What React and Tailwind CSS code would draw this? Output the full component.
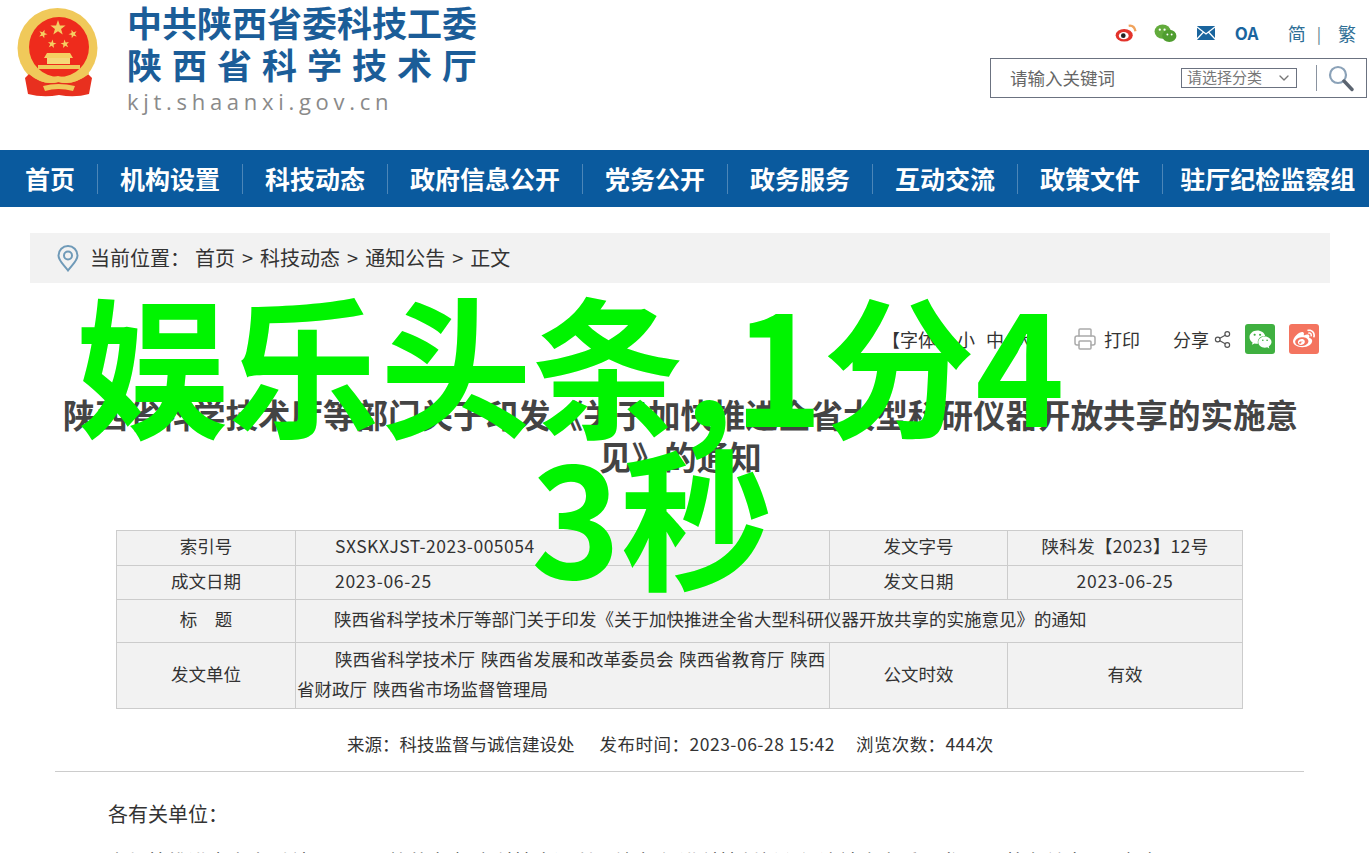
import { Printer, Share2, ChevronDown } from 'lucide-react';
import { FaWeibo, FaWeixin } from 'react-icons/fa';

const navItems = ['首页', '机构设置', '科技动态', '政府信息公开', '党务公开', '政务服务', '互动交流', '政策文件'];
const crumbs = ['首页', '科技动态', '通知公告', '正文'];
const colon = '\uFF1A';

function Star({ x, y, r, rot = 0 }) {
  const pts = [];
  for (let i = 0; i < 10; i++) {
    const rad = i % 2 === 0 ? r : r * 0.4;
    const a = ((i * 36 - 90 + rot) * Math.PI) / 180;
    pts.push(`${x + rad * Math.cos(a)},${y + rad * Math.sin(a)}`);
  }
  return <polygon points={pts.join(' ')} fill="#f5cf62" />;
}

function Emblem() {
  return (
    <svg width="84" height="90" viewBox="0 0 84 90" className="shrink-0">
      <circle cx="40.5" cy="40" r="40" fill="#f0c95a" />
      <circle cx="42" cy="39" r="30" fill="#ee2b1c" />
      <Star x={41} y={20} r={8} />
      <Star x={26} y={26} r={4.5} rot={20} />
      <Star x={56} y={26} r={4.5} rot={-20} />
      <Star x={35} y={36} r={4.5} rot={10} />
      <Star x={48} y={36} r={4.5} rot={-10} />
      <path d="M30 45 H53 L56 50 H27 Z" fill="#f5cf62" />
      <rect x="30" y="50" width="23" height="6" fill="#f5d878" />
      <rect x="21" y="57" width="42" height="4" fill="#f0c95a" />
      <path d="M12 66 L8 70 L11 86 Q26 90 42 87 Q58 90 72 86 L75 70 L71 66 Q56 78 42 74 Q26 78 12 66 Z" fill="#e8301f" />
      <path d="M14 60 Q28 72 41 68 Q54 72 70 60 L72 66 Q56 78 41 74 Q26 78 12 66 Z" fill="#f0c95a" />
      <path d="M26 78 Q41 74 58 78 L56 83 Q41 79 28 83 Z" fill="#f0c95a" />
    </svg>
  );
}

function WechatColor() {
  return (
    <svg width="23" height="19" viewBox="0 0 24 20">
      <ellipse cx="9" cy="8" rx="8.5" ry="7.5" fill="#62ab3c" />
      <ellipse cx="16" cy="12.5" rx="7.5" ry="6.5" fill="#4f9d2f" />
      <circle cx="6" cy="6" r="1.2" fill="#fff" />
      <circle cx="11" cy="6" r="1.2" fill="#fff" />
      <circle cx="14" cy="11" r="1" fill="#fff" />
      <circle cx="18.5" cy="11" r="1" fill="#fff" />
    </svg>
  );
}

function WeiboColor() {
  return (
    <svg width="22" height="18" viewBox="0 0 24 20">
      <ellipse cx="10" cy="12.5" rx="9.5" ry="7" fill="#e2332b" />
      <ellipse cx="9.5" cy="13" rx="5.5" ry="4" fill="#fff" />
      <circle cx="9" cy="13" r="2.6" fill="#222" />
      <path d="M15 2 Q21 1 22.5 8" stroke="#f0a35c" strokeWidth="2.6" fill="none" />
    </svg>
  );
}

function MailIcon() {
  return (
    <svg width="18" height="14" viewBox="0 0 18 14">
      <rect width="18" height="14" rx="1" fill="#1a659e" />
      <path d="M0 1 L9 8 L18 1 M0 13 L6.5 6 M18 13 L11.5 6" stroke="#fff" strokeWidth="1.3" fill="none" />
    </svg>
  );
}

function SearchIcon() {
  return (
    <svg width="26" height="27" viewBox="0 0 26 27">
      <circle cx="10" cy="10" r="8" fill="none" stroke="#8ba2b8" strokeWidth="2.2" />
      <path d="M16 16 L24 24.5" stroke="#5b6470" strokeWidth="3.4" strokeLinecap="round" />
    </svg>
  );
}

function PinIcon() {
  return (
    <svg width="22" height="27" viewBox="0 0 22 27">
      <path d="M11 25.5 C6 19 1.5 15.5 1.5 10.5 A9.5 9.5 0 0 1 20.5 10.5 C20.5 15.5 16 19 11 25.5 Z" fill="none" stroke="#6f9ab8" strokeWidth="2" />
      <circle cx="11" cy="10.5" r="4" fill="none" stroke="#6f9ab8" strokeWidth="2" />
    </svg>
  );
}

function Header() {
  return (
    <div className="h-[150px] flex justify-between">
      <div className="flex pl-[17px] pt-[8px]">
        <Emblem />
        <div className="ml-[26px] -mt-[9px] w-[352px]">
          <div className="text-[35px] leading-[46px] font-bold text-[#1b5d98] whitespace-nowrap">中共陕西省委科技工委</div>
          <div className="text-[35px] leading-[41px] -mt-[2px] font-bold text-[#1b5d98] tracking-[10px] whitespace-nowrap">陕西省科学技术厅</div>
          <div className="text-[22px] leading-[30px] mt-[2px] text-[#8a8a8a] tracking-[4.7px] font-['Open_Sans',sans-serif]">kjt.shaanxi.gov.cn</div>
        </div>
      </div>
      <div className="w-[377px] mr-[2px] flex flex-col items-end">
        <div className="h-[58px] flex items-center pt-[8px] pr-[11px]">
          <WeiboColor />
          <div className="ml-[17px]"><WechatColor /></div>
          <div className="ml-[20px]"><MailIcon /></div>
          <div className="ml-[20px] w-[26px] text-[17px] font-bold text-[#1a659e]">OA</div>
          <div className="ml-[27px] text-[18px] text-[#2f6f96]">简</div>
          <div className="ml-[11px] mr-[17px] text-[16px] text-[#5a7f8c]">|</div>
          <div className="text-[18px] text-[#2f6f96]">繁</div>
        </div>
        <div className="w-full h-[40px] border border-[#6b7280] flex items-center pl-[19px]">
          <div className="w-[171px] text-[17.5px] text-[#666]">请输入关键词</div>
          <div className="w-[116px] h-[20px] border border-[#6b7280] flex items-center justify-between pl-[5px] pr-[4px] text-[15px] text-[#777]">
            <span className="pb-[2px]">请选择分类</span>
            <ChevronDown size={16} />
          </div>
          <div className="ml-[19px] h-[26px] border-l border-[#8a93a0]" />
          <div className="ml-[11px]"><SearchIcon /></div>
        </div>
      </div>
    </div>
  );
}

function Nav() {
  return (
    <div className="h-[57px] bg-[#0a5a9e] flex items-center pl-[3px] text-white text-[25px] font-bold whitespace-nowrap">
      {navItems.map((item, i) => (
        <div key={item} className={i === 0 ? 'px-[22px] leading-[28px] pb-[2px]' : 'px-[22px] border-l border-[#4c86b8] leading-[28px] pb-[2px]'}>
          {item}
        </div>
      ))}
      <div className="pl-[17px] border-l border-[#4c86b8] leading-[28px] pb-[2px]">驻厅纪检监察组</div>
    </div>
  );
}

function Toolbar() {
  return (
    <div className="h-[30px] mt-[41px] mr-[50px] flex items-center justify-end text-[18px] text-[#333] whitespace-nowrap">
      <span>【字体{colon}</span>
      <span className="ml-[3px]">小</span>
      <span className="ml-[11px]">中</span>
      <span className="ml-[11px]">大】</span>
      <Printer size={24} strokeWidth={1.5} className="ml-[22px] text-[#aaa]" />
      <span className="ml-[7px]">打印</span>
      <span className="ml-[33px]">分享</span>
      <Share2 size={19} strokeWidth={1.5} className="ml-[4px] text-[#555]" />
      <div className="ml-[13px] w-[30px] h-[30px] rounded-[3px] bg-[#3fb040] flex items-center justify-center">
        <FaWeixin size={23} color="#fff" />
      </div>
      <div className="ml-[14px] w-[30px] h-[30px] rounded-[3px] bg-[#f4745f] flex items-center justify-center">
        <FaWeibo size={22} color="#fff" />
      </div>
    </div>
  );
}

function InfoTable() {
  const label = 'border border-[#ccc] text-center font-normal pb-[3px]';
  const cell = 'border border-[#ccc] pb-[3px]';
  return (
    <table className="ml-[116px] w-[1127px] table-fixed border-collapse bg-[#f2f2f2] text-[17.5px] text-[#333]">
      <tbody>
        <tr className="h-[35px]">
          <td className={`${label} w-[179px]`}>索引号</td>
          <td className={`${cell} w-[534px] pl-[39px] tracking-[0.5px]`}>SXSKXJST-2023-005054</td>
          <td className={`${label} w-[178px]`}>发文字号</td>
          <td className={`${label} w-[235px] tracking-[0.3px]`}>陕科发【2023】12号</td>
        </tr>
        <tr className="h-[34px]">
          <td className={label}>成文日期</td>
          <td className={`${cell} pl-[39px] tracking-[0.7px]`}>2023-06-25</td>
          <td className={label}>发文日期</td>
          <td className={`${label} tracking-[0.7px]`}>2023-06-25</td>
        </tr>
        <tr className="h-[43px]">
          <td className={label}>标&emsp;题</td>
          <td colSpan={3} className={`${cell} pl-[38px]`}>陕西省科学技术厅等部门关于印发《关于加快推进全省大型科研仪器开放共享的实施意见》的通知</td>
        </tr>
        <tr className="h-[66px]">
          <td className={label}>发文单位</td>
          <td className={`${cell} px-[1px] indent-[38px] leading-[30px] [word-spacing:2px]`}>陕西省科学技术厅 陕西省发展和改革委员会 陕西省教育厅 陕西省财政厅 陕西省市场监督管理局</td>
          <td className={label}>公文时效</td>
          <td className={label}>有效</td>
        </tr>
      </tbody>
    </table>
  );
}

export default function App() {
  return (
    <div className="relative h-[853px] overflow-hidden bg-white font-['Noto_Sans_CJK_SC','Liberation_Sans',sans-serif]">
      <Header />
      <Nav />

      <div className="mt-[26px] mx-[30px] w-[1300px] h-[50px] bg-[#f2f2f2] flex items-center pl-[27px] text-[20px] text-[#333] whitespace-nowrap">
        <PinIcon />
        <span className="ml-[11px]">当前位置{colon}</span>
        <span className="ml-[5px] flex">
          {crumbs.map((c, i) => (
            <span key={c} className="flex">
              {i > 0 && <span className="mx-[7px]">&gt;</span>}
              {c}
            </span>
          ))}
        </span>
      </div>

      <Toolbar />

      <h1 className="mt-[39px] ml-[56px] mr-[64px] text-[32.5px] leading-[42px] font-bold text-[#444] text-center">
        陕西省科学技术厅等部门关于印发《关于加快推进全省大型科研仪器开放共享的实施意见》的通知
      </h1>

      <div className="mt-[53px]">
        <InfoTable />
      </div>

      <div className="mt-[22px] h-[26px] flex items-center pl-[347px] text-[17.5px] text-[#333] whitespace-nowrap">
        <span>来源{colon}科技监督与诚信建设处</span>
        <span className="ml-[25px] tracking-[0.5px]">发布时间{colon}2023-06-28 15:42</span>
        <span className="ml-[21px] tracking-[0.4px]">浏览次数{colon}444次</span>
      </div>

      <div className="mt-[14px] ml-[55px] w-[1249px] border-t border-[#ccc]" />

      <p className="mt-[28px] ml-[108px] text-[20px] leading-[28px] text-[#333]">各有关单位{colon}</p>
      <p className="mt-[20px] ml-[108px] mr-[90px] text-[20px] leading-[28px] text-[#333]">
        为加快推进全省大型科研仪器开放共享,提高科技资源利用效率,促进科技创新和经济社会高质量发展,现将有关事项通知如下。
      </p>

      <div className="absolute left-[76px] top-[285px] text-[152px] leading-[152px] font-bold text-[#00f400] whitespace-nowrap">
        <div>娱乐头条,1分4</div>
        <div className="pl-[455px]">3秒</div>
      </div>
    </div>
  );
}
